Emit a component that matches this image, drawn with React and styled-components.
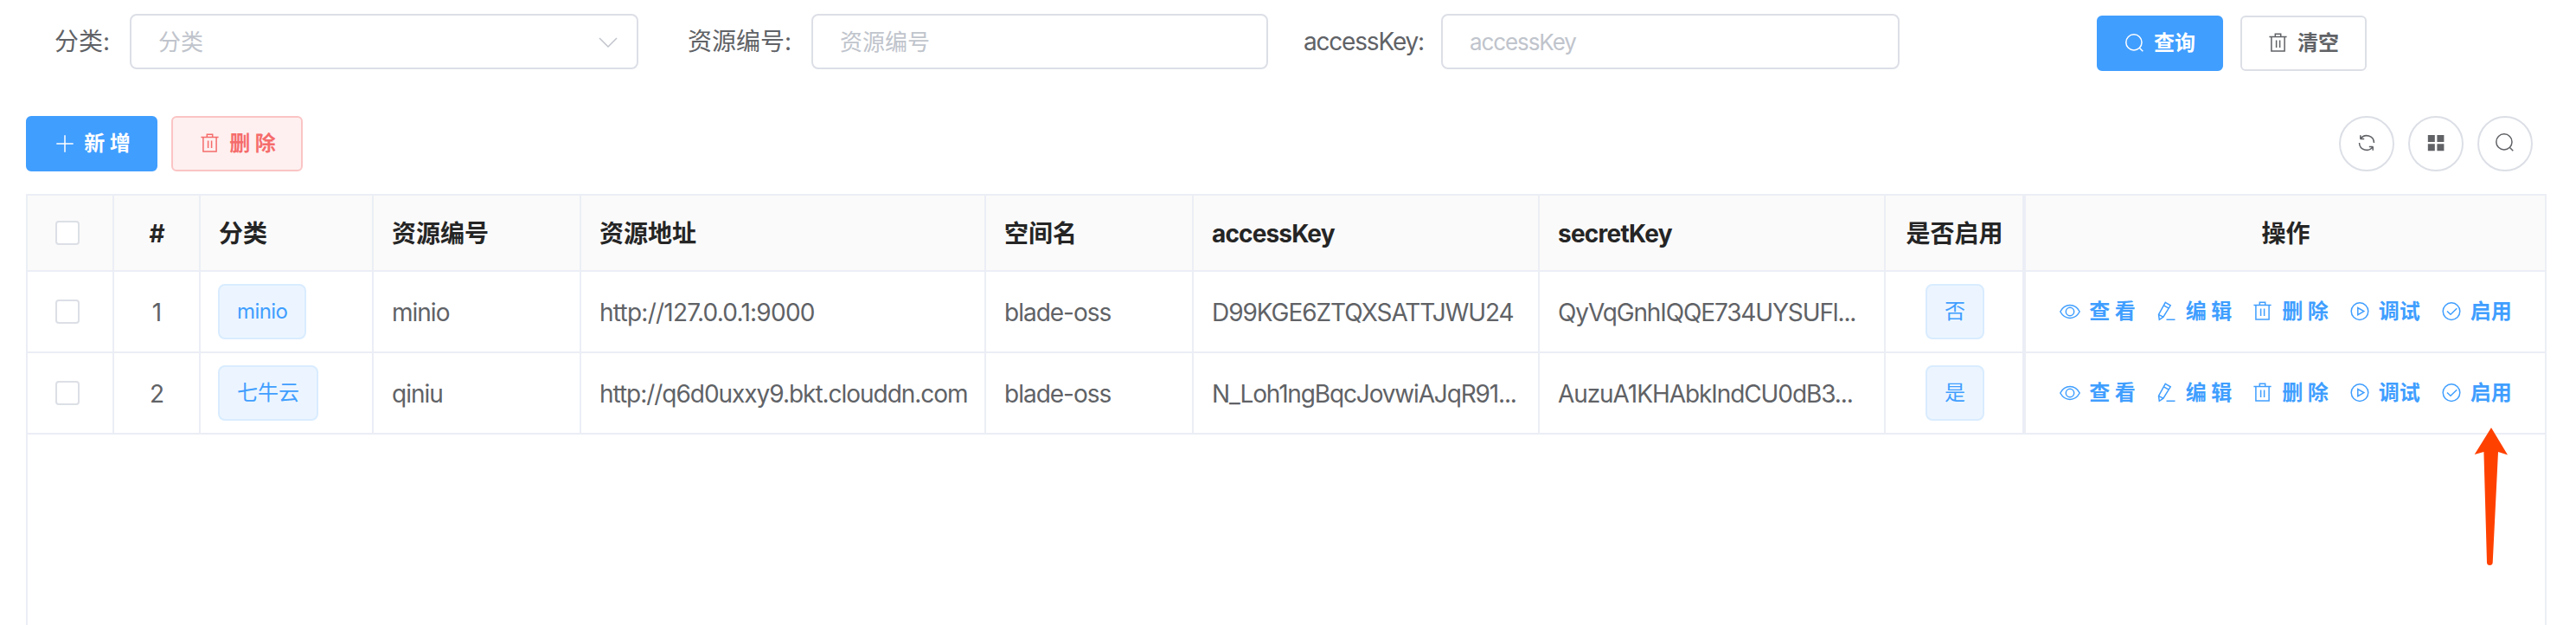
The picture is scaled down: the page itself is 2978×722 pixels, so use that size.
import React from "react";
import styled, { createGlobalStyle, css } from "styled-components";

const GlobalStyle = createGlobalStyle`
  * { box-sizing: border-box; }
  html, body { margin: 0; background: #fff; }
  body {
    font-family: Inter, "Noto Sans CJK SC", sans-serif;
    font-size: 28px;
    color: #606266;
    overflow: hidden;
  }
  button, input { font: inherit; }
`;

const Page = styled.main`
  position: relative;
  width: 2978px;
  height: 722px;
  overflow: hidden;
  display: flex;
  flex-direction: column;
`;

const SearchForm = styled.form`
  display: flex;
  align-items: flex-start;
  height: 134px;
  padding: 16px 0 0 63px;
`;

const Field = styled.div`
  display: flex;
  width: ${(p) => p.$width}px;
  margin-right: ${(p) => p.$gap}px;
`;

const FieldLabel = styled.label`
  flex: none;
  width: ${(p) => p.$width}px;
  height: 64px;
  line-height: 64px;
  white-space: nowrap;
  letter-spacing: ${(p) => p.$track || 0}px;
`;

const InputBox = styled.div`
  flex: 1;
  display: flex;
  align-items: center;
  justify-content: space-between;
  height: 64px;
  padding: 2px 21px 0 31px;
  border: 2px solid #dcdfe6;
  border-radius: 8px;
  color: #c0c4cc;
  font-size: 26px;
  line-height: 58px;
  letter-spacing: ${(p) => p.$track || 0}px;
`;

const FormActions = styled.div`
  display: flex;
  gap: 20px;
  margin-top: 2px;
`;

const tones = {
  primary: css`color: #fff; background: #409eff; border-color: #409eff;`,
  plain: css`color: #606266; background: #fff; border-color: #dcdfe6;`,
  danger: css`color: #f56c6c; background: #fef0f0; border-color: #fbc4c4;`,
};

const Button = styled.button`
  display: flex;
  align-items: center;
  justify-content: center;
  gap: 10px;
  width: ${(p) => p.$width}px;
  height: 64px;
  padding: 0;
  border: 2px solid;
  border-radius: 6px;
  font-size: 24px;
  line-height: 24px;
  font-weight: 600;
  white-space: pre;
  ${(p) => tones[p.$tone]}
`;

const Toolbar = styled.div`
  display: flex;
  justify-content: space-between;
  height: 90px;
  padding: 0 50px 0 30px;
`;

const ToolGroup = styled.div`
  display: flex;
  gap: 16px;

  ${Button} {
    padding-left: 2px;
  }
`;

const RoundButton = styled.button`
  display: flex;
  align-items: center;
  justify-content: center;
  width: 64px;
  height: 64px;
  padding: 0 1px 2px 0;
  border: 2px solid #dcdfe6;
  border-radius: 50%;
  background: #fff;
  color: #606266;
`;

const Table = styled.section`
  flex: 1;
  width: 2914px;
  margin-left: 30px;
  border: 2px solid #ebeef5;
  border-bottom: 0;
`;

const Row = styled.div`
  display: grid;
  grid-template-columns: 100px 100px 200px 240px 468px 240px 400px 400px 160px 602px;
  height: ${(p) => (p.$head ? 88 : 94)}px;
  background: ${(p) => (p.$head ? "#fafafa" : "#fff")};
  color: ${(p) => (p.$head ? "#252525" : "#606266")};
  font-weight: ${(p) => (p.$head ? 700 : 400)};
`;

const Cell = styled.div`
  display: flex;
  align-items: center;
  justify-content: ${(p) => (p.$center ? "center" : "flex-start")};
  min-width: 0;
  padding: 0 ${(p) => (p.$center ? 0 : 20)}px;
  border-right: 2px solid #ebeef5;
  border-bottom: 2px solid #ebeef5;
  &:last-child {
    border-right: 0;
    border-left: 2px solid #ebeef5;
  }
`;

const Text = styled.span`
  padding: 2px 0 0 1px;
  white-space: nowrap;
  line-height: 46px;
  letter-spacing: ${(p) => p.$track || 0}px;
`;

const Checkbox = styled.span`
  width: 28px;
  height: 28px;
  margin-right: 6px;
  border: 2px solid #dcdfe6;
  border-radius: 4px;
  background: #fff;
`;

const Tag = styled.span`
  height: 64px;
  margin-left: ${(p) => p.$offset || 0}px;
  padding: 0 20px;
  border: 2px solid #d9ecff;
  border-radius: 8px;
  background: #ecf5ff;
  color: #409eff;
  font-size: 24px;
  line-height: 60px;
  white-space: nowrap;
  letter-spacing: ${(p) => p.$track || 0}px;
`;

const RowActions = styled.div`
  display: flex;
  gap: 24px;
  padding-left: 1px;
`;

const ActionLink = styled.a`
  display: flex;
  align-items: center;
  gap: 10px;
  color: #409eff;
  font-size: 24px;
  line-height: 24px;
  font-weight: 600;
  white-space: pre;
`;

const Spaced = styled.span`
  word-spacing: -0.6px;
`;

const Svg = styled.svg`
  flex: none;
  display: block;
  width: 24px;
  height: 24px;
  fill: none;
  stroke: currentColor;
  stroke-width: 1.5;
`;

const Pointer = styled.svg`
  position: absolute;
  left: 2858px;
  top: 490px;
  width: 44px;
  height: 168px;
`;

const shapes = {
  plus: <path d="M12 2.3v19.4M2.3 12h19.4" />,
  trash: (
    <path d="M1.4 4.6h20.2M8.3 4.6V1.3h6.4v3.3M3.9 4.6v16.5h15.2V4.6M9.6 8.5v8.4M13.6 8.5v8.4" />
  ),
  search: (
    <>
      <circle cx="10.9" cy="10.9" r="9.1" />
      <path d="M17.3 17.3l4 4" />
    </>
  ),
  refresh: (
    <path d="M4.8 7.8V3.2M4.8 7.6h4.4M5 7.4A8.5 8.5 0 0 1 20.5 12M19.2 16.2v4.6M19.2 16.4h-4.4M19 16.6A8.5 8.5 0 0 1 3.5 12" />
  ),
  grid: (
    <path
      fill="currentColor"
      stroke="none"
      d="M2.8 3h8v8h-8zM13.4 3h8v8h-8zM2.8 13.3h8v8h-8zM13.4 13.3h8v8h-8z"
    />
  ),
  eye: (
    <>
      <path d="M.8 12C6.2 2.1 17.8 2.1 23.2 12 17.8 21.9 6.2 21.9.8 12z" />
      <circle cx="12" cy="12" r="4.7" />
    </>
  ),
  edit: (
    <path d="M10.3 1.4l5.9 3.4-8.3 13.3-4.6 3.2-.8-5.8zM8.4 4.8l5.9 3.4M2.7 15.6l5.3 2.6M11.5 21.2h10" />
  ),
  play: (
    <>
      <circle cx="12" cy="11.6" r="9.8" />
      <path d="M9.8 7.6v8l7-4z" />
    </>
  ),
  check: (
    <>
      <circle cx="12" cy="11.6" r="9.8" />
      <path d="M7 11.5l4 3.8 7.3-7" />
    </>
  ),
  down: <path d="M2 7l10 10L22 7" />,
};

const Icon = ({ name }) => <Svg viewBox="0 0 24 24">{shapes[name]}</Svg>;

const columns = [
  ["分类"],
  ["资源编号"],
  ["资源地址"],
  ["空间名"],
  ["accessKey", -0.85],
  ["secretKey", -0.75],
];

const records = [
  {
    type: "minio",
    tagTrack: -0.6,
    cells: [
      ["minio", -1],
      ["http://127.0.0.1:9000", -0.75],
      ["blade-oss", -1],
      ["D99KGE6ZTQXSATTJWU24", -1.05],
      ["QyVqGnhIQQE734UYSUFl...", -1.13],
    ],
    enabled: "否",
  },
  {
    type: "七牛云",
    cells: [
      ["qiniu", -1],
      ["http://q6d0uxxy9.bkt.clouddn.com", -1.03],
      ["blade-oss", -1],
      ["N_Loh1ngBqcJovwiAJqR91...", -1.15],
      ["AuzuA1KHAbkIndCU0dB3...", -1.08],
    ],
    enabled: "是",
  },
];

const actions = [
  ["eye", "查 看"],
  ["edit", "编 辑"],
  ["trash", "删 除"],
  ["play", "调试"],
  ["check", "启用"],
];

export default function App() {
  return (
    <>
      <GlobalStyle />
      <Page>
        <SearchForm>
          <Field $width={675} $gap={57}>
            <FieldLabel $width={87}>分类:</FieldLabel>
            <InputBox>
              分类
              <Icon name="down" />
            </InputBox>
          </Field>
          <Field $width={671} $gap={41}>
            <FieldLabel $width={143}>资源编号:</FieldLabel>
            <InputBox>资源编号</InputBox>
          </Field>
          <Field $width={689} $gap={228}>
            <FieldLabel $width={159} $track={-1.2}>
              accessKey:
            </FieldLabel>
            <InputBox $track={-1.1}>accessKey</InputBox>
          </Field>
          <FormActions>
            <Button type="button" $tone="primary" $width={146}>
              <Icon name="search" />
              查询
            </Button>
            <Button type="button" $tone="plain" $width={146}>
              <Icon name="trash" />
              清空
            </Button>
          </FormActions>
        </SearchForm>

        <Toolbar>
          <ToolGroup>
            <Button $tone="primary" $width={152}>
              <Icon name="plus" />
              <Spaced>新 增</Spaced>
            </Button>
            <Button $tone="danger" $width={152}>
              <Icon name="trash" />
              <Spaced>删 除</Spaced>
            </Button>
          </ToolGroup>
          <ToolGroup>
            {["refresh", "grid", "search"].map((name) => (
              <RoundButton key={name}>
                <Icon name={name} />
              </RoundButton>
            ))}
          </ToolGroup>
        </Toolbar>

        <Table>
          <Row $head>
            <Cell $center>
              <Checkbox />
            </Cell>
            <Cell $center>
              <Text>#</Text>
            </Cell>
            {columns.map(([label, track]) => (
              <Cell key={label}>
                <Text $track={track}>{label}</Text>
              </Cell>
            ))}
            <Cell $center>
              <Text>是否启用</Text>
            </Cell>
            <Cell $center>
              <Text>操作</Text>
            </Cell>
          </Row>
          {records.map((record, index) => (
            <Row key={record.type}>
              <Cell $center>
                <Checkbox />
              </Cell>
              <Cell $center>
                <Text>{index + 1}</Text>
              </Cell>
              <Cell>
                <Tag $track={record.tagTrack}>{record.type}</Tag>
              </Cell>
              {record.cells.map(([value, track]) => (
                <Cell key={value}>
                  <Text $track={track}>{value}</Text>
                </Cell>
              ))}
              <Cell $center>
                <Tag $offset={2}>{record.enabled}</Tag>
              </Cell>
              <Cell $center>
                <RowActions>
                  {actions.map(([icon, label]) => (
                    <ActionLink key={label}>
                      <Icon name={icon} />
                      <Spaced>{label}</Spaced>
                    </ActionLink>
                  ))}
                </RowActions>
              </Cell>
            </Row>
          ))}
        </Table>

        <Pointer viewBox="0 0 44 168">
          <path
            fill="#ff4100"
            d="M22 4L41 35.5 30 32 23.7 160q-.3 3-3.4 3t-3.3-3L13.4 32 2.7 35z"
          />
        </Pointer>
      </Page>
    </>
  );
}
